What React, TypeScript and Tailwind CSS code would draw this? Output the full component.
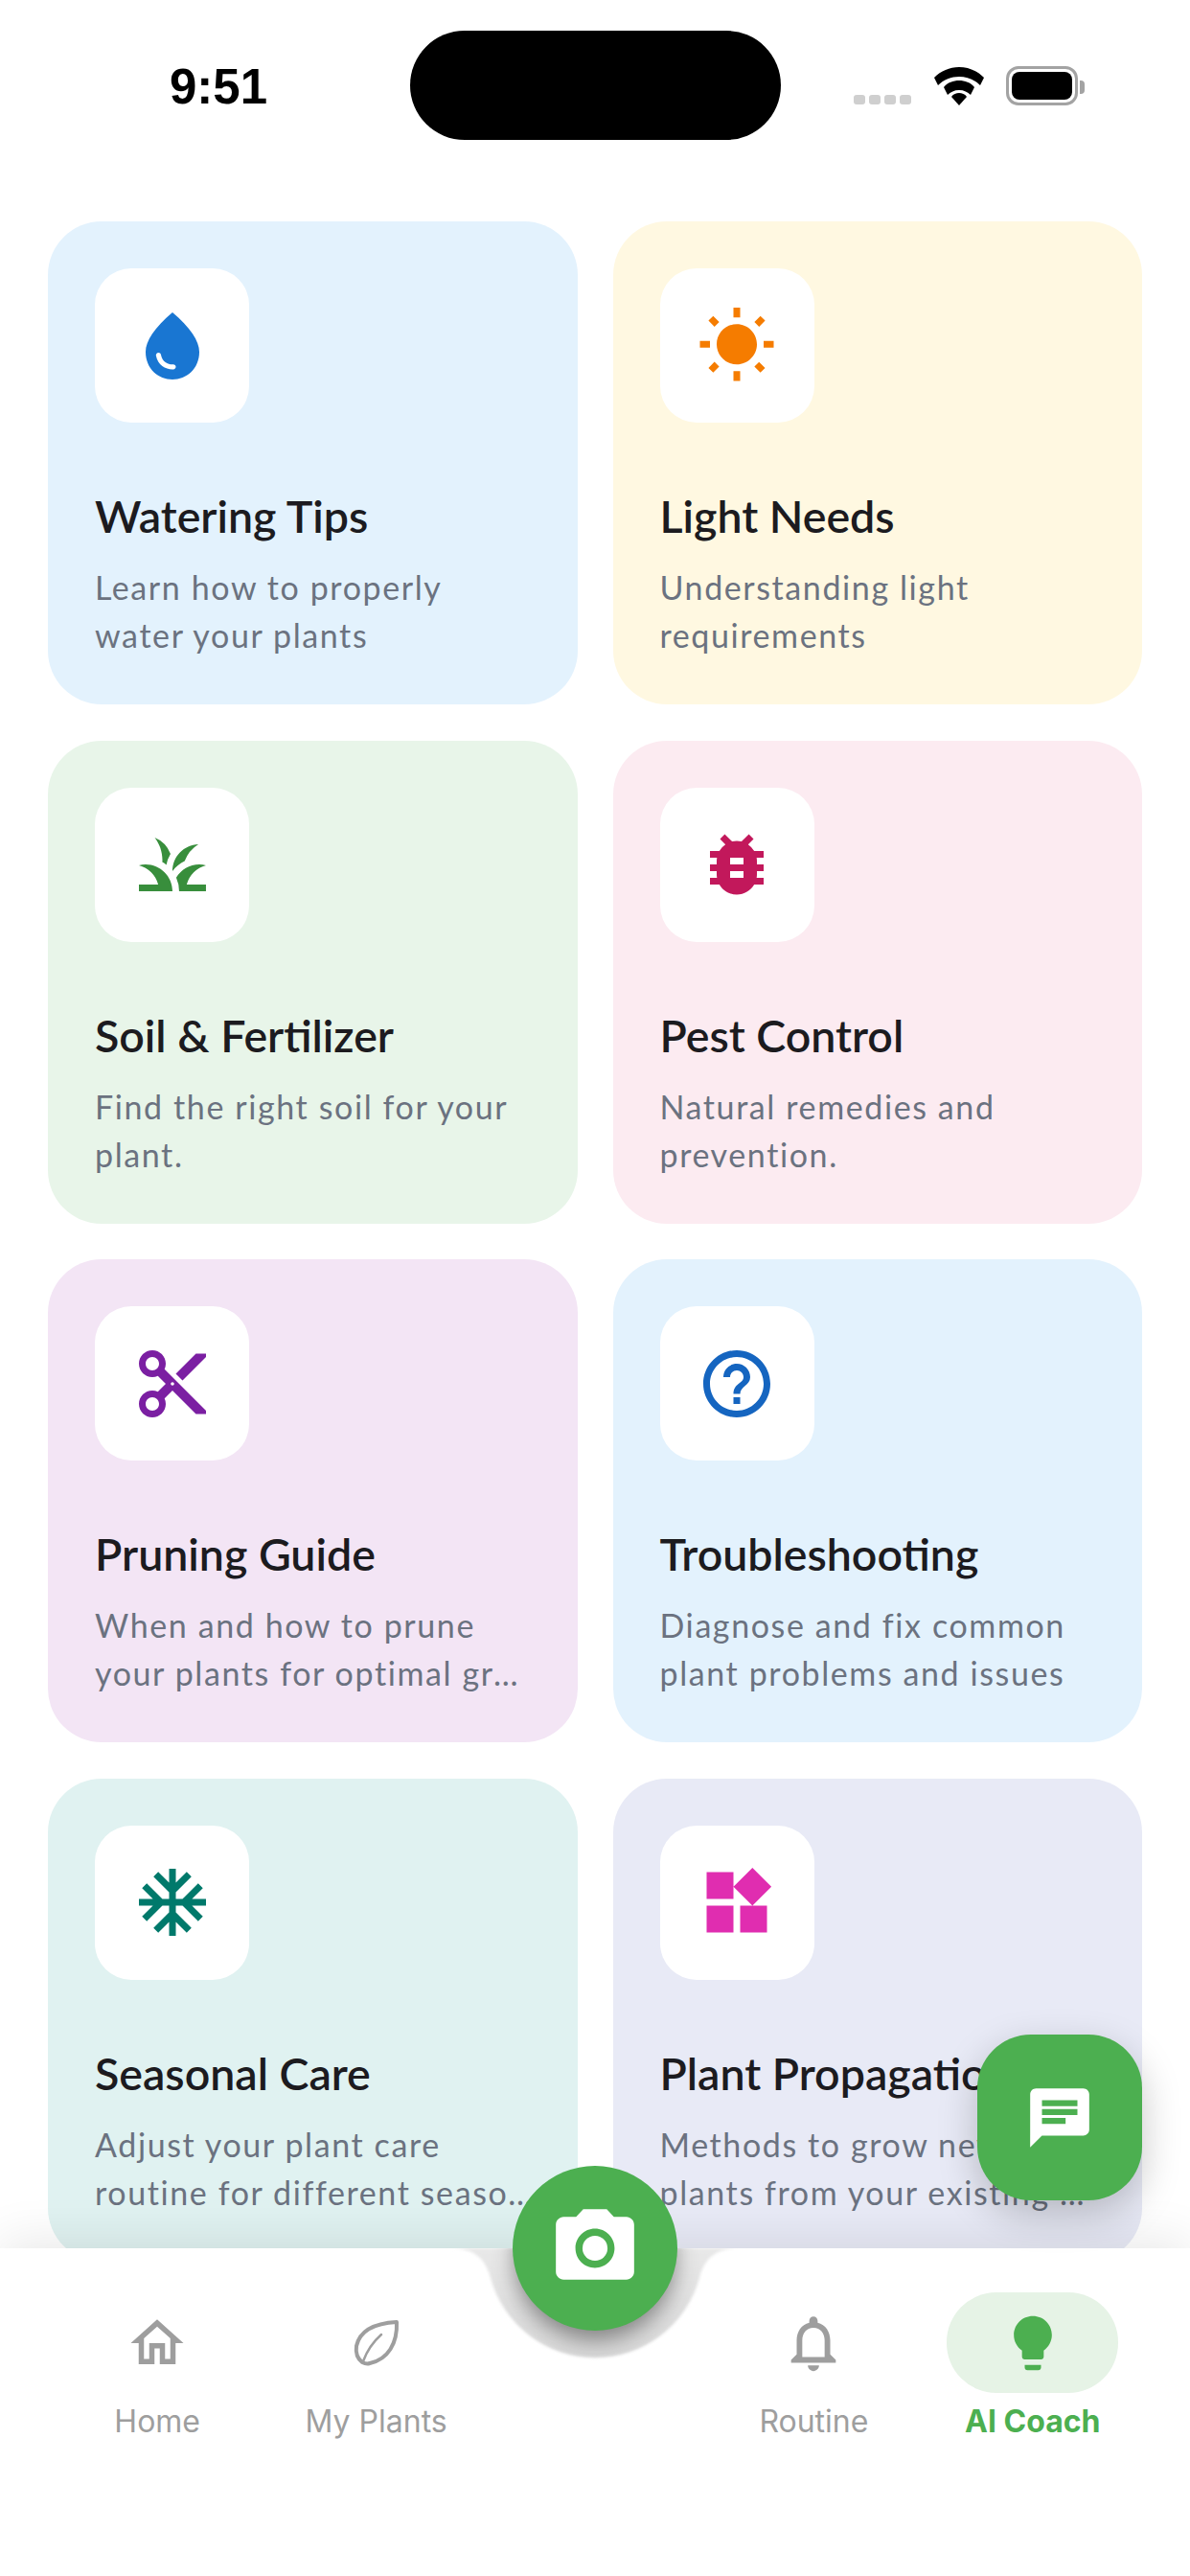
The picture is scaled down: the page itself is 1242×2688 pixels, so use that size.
import { ReactNode } from 'react';
import {
  MdAcUnit,
  MdBugReport,
  MdCameraAlt,
  MdChat,
  MdContentCut,
  MdGrass,
  MdHelpOutline,
  MdLightbulb,
  MdOutlineHome,
  MdOutlineNotifications,
  MdWaterDrop,
  MdWbSunny,
  MdWidgets,
} from 'react-icons/md';

type Topic = {
  title: string;
  lines: [string, string];
  bg: string;
  color: string;
  icon: ReactNode;
};

const topics: Topic[] = [
  { title: 'Watering Tips', lines: ['Learn how to properly', 'water your plants'], bg: 'bg-[#e3f2fd]', color: 'text-[#1976d2]', icon: <MdWaterDrop size={84} /> },
  { title: 'Light Needs', lines: ['Understanding light', 'requirements'], bg: 'bg-[#fff8e1]', color: 'text-[#f57c00]', icon: <MdWbSunny size={84} /> },
  { title: 'Soil & Fertilizer', lines: ['Find the right soil for your', 'plant.'], bg: 'bg-[#e8f5e9]', color: 'text-[#388e3c]', icon: <MdGrass size={84} /> },
  { title: 'Pest Control', lines: ['Natural remedies and', 'prevention.'], bg: 'bg-[#fcebf1]', color: 'text-[#c2185b]', icon: <MdBugReport size={84} /> },
  { title: 'Pruning Guide', lines: ['When and how to prune', 'your plants for optimal growth'], bg: 'bg-[#f3e5f5]', color: 'text-[#7b1fa2]', icon: <MdContentCut size={84} /> },
  { title: 'Troubleshooting', lines: ['Diagnose and fix common', 'plant problems and issues'], bg: 'bg-[#e3f2fd]', color: 'text-[#1565c0]', icon: <MdHelpOutline size={84} /> },
  { title: 'Seasonal Care', lines: ['Adjust your plant care', 'routine for different seasons'], bg: 'bg-[#e0f2f1]', color: 'text-[#00796b]', icon: <MdAcUnit size={84} /> },
  { title: 'Plant Propagation', lines: ['Methods to grow new', 'plants from your existing ones'], bg: 'bg-[#e8eaf6]', color: 'text-[#e02db0]', icon: <MdWidgets size={84} /> },
];

function LeafIcon() {
  return (
    <svg width="50" height="50" viewBox="0 0 50 50" fill="none" stroke="currentColor" strokeLinejoin="round" strokeLinecap="round">
      <path strokeWidth="4" d="M46 3C27 4 8 10 4 28c-1 7 1 13 6 17 2 1 5 2 8 1C37 42 47 25 46 3z" />
      <path strokeWidth="2.5" d="M11 44C15 33 21 24 30 16" />
    </svg>
  );
}

function StatusBar() {
  return (
    <header className="h-[231px] shrink-0 flex items-start pt-[32px]">
      <span className="w-[428px] pl-[177px] pt-[26px] text-[51px] leading-[66px] font-semibold text-black font-['Liberation_Sans',sans-serif]">
        9:51
      </span>
      <div className="w-[387px] h-[114px] rounded-[57px] bg-black" />
      <div className="ml-[76px] mt-[37px] flex items-end h-[41px]">
        <div className="flex gap-[4px] mb-[1px]">
          <i className="w-[12px] h-[10px] rounded-[3px] bg-[#cfcfcf]" />
          <i className="w-[12px] h-[10px] rounded-[3px] bg-[#cfcfcf]" />
          <i className="w-[12px] h-[10px] rounded-[3px] bg-[#cfcfcf]" />
          <i className="w-[12px] h-[10px] rounded-[3px] bg-[#cfcfcf]" />
        </div>
        <svg className="ml-[24px]" width="52" height="40" viewBox="0 0 52 40">
          <path d="M26 0C16 0 7 4 0 11l4 8c6-6 14-9 22-9s16 3 22 9l4-8C45 4 36 0 26 0z" />
          <path d="M26 14c-6 0-12 2-16 7l4 8c3-3 7-5 12-5s9 2 12 5l4-8c-4-5-10-7-16-7z" />
          <path d="M26 27c-3 0-6 1-8 4l8 9 8-9c-2-3-5-4-8-4z" />
        </svg>
        <div className="ml-[23px] w-[75px] h-[41px] rounded-[13px] border-[3px] border-[#a3a3a3] p-[3px] flex">
          <div className="flex-1 rounded-[8px] bg-black" />
        </div>
        <div className="ml-[2px] mb-[12px] w-[5px] h-[14px] rounded-r-[4px] bg-[#a3a3a3]" />
      </div>
    </header>
  );
}

function TopicCard({ topic }: { topic: Topic }) {
  return (
    <div className={`${topic.bg} h-[504px] rounded-[56px] p-[49px] flex flex-col font-['Lato',sans-serif]`}>
      <div className={`${topic.color} w-[161px] h-[161px] shrink-0 rounded-[38px] bg-white flex items-center justify-center`}>
        {topic.icon}
      </div>
      <h3 className="mt-[67px] text-[46.5px] leading-[60px] font-semibold text-[#1c1b1f] whitespace-nowrap">{topic.title}</h3>
      <div className="mt-[20px] -mr-[3px] text-[34px] leading-[50px] tracking-[1.6px] text-[#6b7280]">
        <p className="whitespace-nowrap">{topic.lines[0]}</p>
        <p className="whitespace-nowrap overflow-hidden text-ellipsis">{topic.lines[1]}</p>
      </div>
    </div>
  );
}

function NavItem({ icon, label, active }: { icon: ReactNode; label: string; active?: boolean }) {
  return (
    <div className="flex flex-col items-center">
      <div className={`w-[179px] h-[105px] rounded-[52px] flex items-center justify-center ${active ? 'bg-[#e6f3e6] text-[#4caf50]' : 'text-[#9e9e9e]'}`}>
        {icon}
      </div>
      <span className={`mt-[10px] text-[32px] leading-[40px] font-['Inter',sans-serif] ${active ? 'font-bold text-[#4caf50]' : 'text-[#9e9e9e]'}`}>
        {label}
      </span>
    </div>
  );
}

function BottomNav() {
  return (
    <nav className="relative z-10 h-[342px] shrink-0 bg-white shadow-[0_-8px_48px_rgba(0,0,0,0.09)] px-[50px] pt-[46px] grid grid-cols-5 items-start">
      <NavItem icon={<MdOutlineHome size={66} />} label="Home" />
      <NavItem icon={<LeafIcon />} label="My Plants" />
      <div />
      <NavItem icon={<MdOutlineNotifications size={70} />} label="Routine" />
      <NavItem icon={<MdLightbulb size={68} />} label="AI Coach" active />

      <svg className="absolute left-[469px] top-0" width="304" height="118" viewBox="0 0 304 118">
        <defs>
          <linearGradient id="notchFill" x1="0" y1="0" x2="0" y2="1">
            <stop offset="0" stopColor="#e8e8e8" />
            <stop offset="1" stopColor="#d8d8d8" />
          </linearGradient>
          <clipPath id="notchClip">
            <path d="M0 0C28 0 38 12 43 31A113 113 0 0 0 261 31C266 12 276 0 304 0Z" />
          </clipPath>
          <filter id="notchBlur" x="-30%" y="-30%" width="160%" height="160%">
            <feGaussianBlur stdDeviation="11" />
          </filter>
          <filter id="notchEdge" x="-5%" y="-5%" width="110%" height="110%">
            <feGaussianBlur stdDeviation="1.5" />
          </filter>
        </defs>
        <path d="M0 0C28 0 38 12 43 31A113 113 0 0 0 261 31C266 12 276 0 304 0Z" fill="url(#notchFill)" filter="url(#notchEdge)" />
        <g clipPath="url(#notchClip)">
          <circle cx="152" cy="12" r="84" fill="#000" fillOpacity="0.4" filter="url(#notchBlur)" />
        </g>
      </svg>

      <button className="absolute left-[535px] -top-[86px] w-[172px] h-[172px] rounded-full bg-[#4caf50] text-white flex items-center justify-center">
        <MdCameraAlt size={98} />
      </button>
    </nav>
  );
}

export default function App() {
  return (
    <div className="relative w-[1242px] h-[2688px] bg-white overflow-hidden flex flex-col">
      <StatusBar />
      <main className="flex-1 min-h-0 overflow-hidden px-[50px]">
        <div className="grid grid-cols-2 gap-x-[37px] gap-y-[37.5px]">
          {topics.map((topic) => (
            <TopicCard key={topic.title} topic={topic} />
          ))}
        </div>
      </main>
      <BottomNav />
      <button className="absolute z-20 left-[1020px] top-[2123px] w-[172px] h-[173px] rounded-[56px] bg-[#4caf50] text-white flex items-center justify-center shadow-[0_14px_40px_rgba(0,0,0,0.22)]">
        <MdChat size={74} />
      </button>
    </div>
  );
}
